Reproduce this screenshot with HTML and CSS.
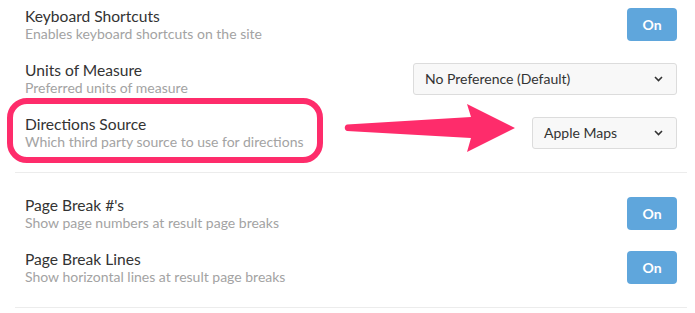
FILE: index.html
```html
<!DOCTYPE html>
<html>
<head>
<meta charset="utf-8">
<link rel="stylesheet" href="styles.css">
</head>
<body>
<div class="page">
  <section class="group">
    <div class="row">
      <div class="text">
        <div class="title">Keyboard Shortcuts</div>
        <div class="sub">Enables keyboard shortcuts on the site</div>
      </div>
      <button class="toggle">On</button>
    </div>
    <div class="row">
      <div class="text">
        <div class="title">Units of Measure</div>
        <div class="sub">Preferred units of measure</div>
      </div>
      <div class="select wide"><span>No Preference (Default)</span><svg class="chev" width="9" height="6" viewBox="0 0 9 6"><path d="M1 1 L4.5 4.5 L8 1" fill="none" stroke="#333" stroke-width="1.6"/></svg></div>
    </div>
    <div class="row">
      <div class="text">
        <div class="title">Directions Source</div>
        <div class="sub">Which third party source to use for directions</div>
      </div>
      <div class="select narrow"><span>Apple Maps</span><svg class="chev" width="9" height="6" viewBox="0 0 9 6"><path d="M1 1 L4.5 4.5 L8 1" fill="none" stroke="#333" stroke-width="1.6"/></svg></div>
    </div>
  </section>
  <section class="group">
    <div class="row">
      <div class="text">
        <div class="title">Page Break #'s</div>
        <div class="sub">Show page numbers at result page breaks</div>
      </div>
      <button class="toggle">On</button>
    </div>
    <div class="row">
      <div class="text">
        <div class="title">Page Break Lines</div>
        <div class="sub">Show horizontal lines at result page breaks</div>
      </div>
      <button class="toggle">On</button>
    </div>
  </section>
  <div class="highlight"></div>
  <svg class="arrow" width="695" height="313" viewBox="0 0 695 313">
    <path d="M347 124.5 C344 125.5 344 130 347 131 L471 138 L467 152 L515 128 L467 104 L471 117 Z" fill="#fe2c6b"/>
  </svg>
</div>
</body>
</html>
```
FILE: styles.css
```css
html, body {
  margin: 0;
  padding: 0;
  background: #ffffff;
}
.page {
  position: relative;
  width: 695px;
  height: 313px;
  overflow: hidden;
  font-family: Lato, "Open Sans", sans-serif;
}
.group {
  margin-left: 15px;
  margin-right: 8px;
  display: flex;
  flex-direction: column;
  gap: 5px;
  border-bottom: 1px solid #ececec;
  padding-bottom: 15px;
}
.group + .group {
  padding-top: 16px;
}
.row {
  height: 49px;
  display: flex;
  align-items: center;
  justify-content: space-between;
  padding-left: 10px;
  padding-right: 10px;
}
.text {
  display: flex;
  flex-direction: column;
}
.title {
  font-size: 15.6px;
  line-height: 18px;
  color: #333333;
}
.sub {
  font-size: 14px;
  line-height: 18px;
  color: #a3a3a3;
}
.toggle {
  width: 50px;
  height: 33px;
  border: none;
  border-radius: 4px;
  background: #5fa6dc;
  color: #ffffff;
  font-family: Lato, sans-serif;
  font-weight: 700;
  font-size: 14px;
  padding: 0;
}
.select {
  box-sizing: border-box;
  height: 32px;
  border: 1px solid #dcdcdc;
  border-radius: 3px;
  background: #f8f8f8;
  display: flex;
  align-items: center;
  justify-content: space-between;
  padding: 0 13px 0 11px;
  font-size: 14px;
  color: #333333;
}
.select.wide { width: 264px; }
.select.narrow { width: 145px; }
.chev { display: block; }
.highlight {
  position: absolute;
  left: 7px;
  top: 98px;
  width: 316px;
  height: 65px;
  box-sizing: border-box;
  border: 6px solid #fe2c6b;
  border-radius: 20px;
}
.arrow {
  position: absolute;
  left: 0;
  top: 0;
}
```
